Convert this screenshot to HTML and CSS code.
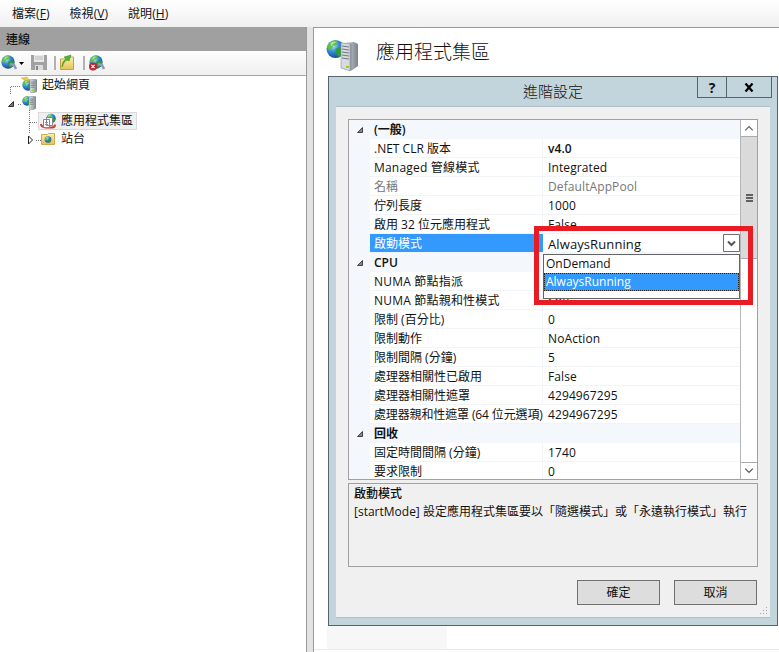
FILE: index.html
```html
<!DOCTYPE html>
<html lang="zh-Hant">
<head>
<meta charset="utf-8">
<title>應用程式集區</title>
<link rel="stylesheet" href="styles.css">
</head>
<body>
<svg width="0" height="0" class="defs">
  <defs>
    <radialGradient id="sea" cx=".35" cy=".3" r=".8"><stop offset="0" stop-color="#c4ecff"/><stop offset=".4" stop-color="#3b92d6"/><stop offset="1" stop-color="#0b3b8c"/></radialGradient>
    <linearGradient id="metal" x1="0" x2="1"><stop offset="0" stop-color="#e8ebee"/><stop offset=".5" stop-color="#b4bac0"/><stop offset="1" stop-color="#7b838b"/></linearGradient>
    <linearGradient id="manila" x1="0" y1="0" x2="0" y2="1"><stop offset="0" stop-color="#fbeeb0"/><stop offset="1" stop-color="#e6c257"/></linearGradient>
    <symbol id="globe" viewBox="0 0 16 16">
      <circle cx="8" cy="8" r="7.6" fill="url(#sea)"/>
      <path d="M2 4 Q5 0 9 1 L10 3 L8 5 L6 5 L5 8 L3 9 L1 7Z" fill="#5fc045"/>
      <path d="M8 8 L12 6 L15 8 Q15 12 11 15 L9 13Z" fill="#2e9b3d"/>
      <path d="M4 3 Q6 1 9 2 Q6 3 4 6Z" fill="#d6f7b6" opacity=".7"/>
    </symbol>
    <symbol id="tower" viewBox="0 0 8 16">
      <path d="M0 1 L5 0 L8 1 V14 L4 16 L0 15Z" fill="url(#metal)" stroke="#777f87" stroke-width=".6"/>
      <path d="M1 3.5H5M1 5.5H5M1 7.5H5M1 9.5H5" stroke="#68717a" stroke-width=".8"/>
      <path d="M2 13H5" stroke="#9acb35" stroke-width="1.5"/>
    </symbol>
  </defs>
</svg>
<div class="app">
  <nav class="menu"><span>檔案(<u>F</u>)</span><span>檢視(<u>V</u>)</span><span>說明(<u>H</u>)</span></nav>
  <div class="work">
    <aside class="side">
      <h2>連線</h2>
      <div class="tools">
        <svg width="110" height="24" viewBox="0 0 110 24">
          <use href="#globe" x="1" y="4" width="14" height="14"/>
          <path d="M10 13l4 1 2 4" fill="none" stroke="#8d9db0" stroke-width="2.6"/>
          <path d="M19 11h5l-2.500 3z" fill="#000"/>
          <path d="M31 4h16v15H31z" fill="#a2a2a2"/><path d="M34 4h10v7H34z" fill="#e9e9e9"/><path d="M35 6h8M35 8h8" stroke="#bbb"/><path d="M35 14h8v5h-8z" fill="#dcdcdc"/><path d="M36 15h2v4h-2z" fill="#888"/>
          <path d="M55 5v14M84 5v14" stroke="#9a9a9a" stroke-width="1.500"/>
          <path d="M60.500 8h6l1-2h6v12.500h-13z" fill="url(#manila)" stroke="#cfa03a"/>
          <path d="M62 16q0-6 4-8l-2-2 7-2-2 6-2-1q-3 1-5 7z" fill="#4eb52d" stroke="#2c8a1c" stroke-width=".5"/>
          <use href="#globe" x="89" y="4" width="14" height="14"/>
          <path d="M98 13l4 1 2 4" fill="none" stroke="#8d9db0" stroke-width="2.600"/>
          <circle cx="93" cy="15.500" r="4" fill="#c5222b"/><path d="M91.400 13.900l3.200 3.200m0-3.200l-3.200 3.200" stroke="#fff" stroke-width="1.200"/>
        </svg>
      </div>
      <ul class="tree">
        <li class="t1"><svg width="38" height="18" viewBox="0 0 38 18"><path d="M10.500 18V10.500H21" fill="none" stroke="#777" stroke-dasharray="1 1"/><use href="#globe" x="22" y="3" width="12" height="12"/><path d="M21 2l6-1 3 4-6-1z" fill="#efc84a" stroke="#c99a22" stroke-width=".4"/><use href="#tower" x="30" y="3" width="7" height="14"/></svg><span>起始網頁</span></li>
        <li class="t2"><svg width="38" height="18" viewBox="0 0 38 18"><path d="M8.500 12.500h5V7.500z" fill="#777" stroke="#333"/><path d="M18 10.500h4M29.500 16v2" stroke="#777" stroke-dasharray="1 1"/><use href="#globe" x="22" y="2" width="10" height="10"/><use href="#tower" x="29" y="2" width="7" height="14"/></svg></li>
        <li class="t3"><svg width="38" height="18" viewBox="0 0 38 18"><path d="M29.500 0V18M30 10.500h8" stroke="#777" stroke-dasharray="1 1"/></svg><span class="picked"><svg width="20" height="17" viewBox="0 0 20 17"><use href="#globe" x="7" y="0" width="10" height="11"/><path d="M2 11q0 3 5 3.500h6q3 0 3-3" fill="none" stroke="#c93a35" stroke-width="2"/><path d="M7.500 4.500h6v8h-6zM4.500 6.500h6v8h-6z" fill="#fff" stroke="#7f8790"/><path d="M6 9.500h3M6 11.500h3" stroke="#8b95a0"/></svg>應用程式集區</span></li>
        <li class="t4"><svg width="57" height="18" viewBox="0 0 57 18"><path d="M29.500 0v4M36 10.500h5" stroke="#777" stroke-dasharray="1 1"/><path d="M28.500 6v8l4-4z" fill="#fff" stroke="#222"/><path d="M41.500 4.500h6l1-1h6v11h-13z" fill="url(#manila)" stroke="#cfa84c"/><use href="#globe" x="44" y="6" width="8" height="7"/></svg><span>站台</span></li>
      </ul>
    </aside>
    <div class="gutter"></div>
    <main class="main">
      <header class="heading">
        <svg width="34" height="34" viewBox="0 0 34 34"><use href="#globe" x="0" y="0" width="19" height="20"/><path d="M15 4L28 3 32 5V27L25 32 15 29Z" fill="url(#metal)"/><path d="M15 4L24 5V32L15 29Z" fill="#d7dbdf" stroke="#868e95" stroke-width=".6"/><path d="M16 7l7 1M16 10l7 1M16 13l7 1M16 16l7 1M16 19l7 1" stroke="#6f7780"/><path d="M25 5V31" stroke="#838b93"/><path d="M20 28h3" stroke="#9c3" stroke-width="2"/></svg>
        <h1>應用程式集區</h1>
      </header>
      <div class="footer-band"><i></i></div>
    </main>
  </div>
</div>

<section class="dialog">
  <div class="title"><span>進階設定</span>
    <div class="winbtns"><b>?</b><b><svg width="10" height="9" viewBox="0 0 10 9"><path d="M1.500.5l7 8M8.500.5l-7 8" stroke="#000" stroke-width="2.300"/></svg></b></div>
  </div>
  <div class="body">
    <div class="grid">
      <div class="rows">
        <div class="cat"><svg width="21" height="18"><path d="M8.500 12.500h5V7.500z" fill="#888" stroke="#444"/></svg><b>(一般)</b></div>
        <div class="row"><span>.NET CLR 版本</span><em class="strong">v4.0</em></div>
        <div class="row"><span class="wide">Managed 管線模式</span><em>Integrated</em></div>
        <div class="row off"><span>名稱</span><em>DefaultAppPool</em></div>
        <div class="row"><span>佇列長度</span><em>1000</em></div>
        <div class="row"><span>啟用 32 位元應用程式</span><em>False</em></div>
        <div class="row sel"><span>啟動模式</span><em><q>AlwaysRunning</q><svg class="combo" width="17" height="18" viewBox="0 0 17 18"><path d="M.5.500h16v17H.5z" fill="#fff" stroke="#707070"/><path d="M5 7.500l3.500 3.500L12 7.500" fill="none" stroke="#555" stroke-width="2"/></svg></em></div>
        <div class="cat"><svg width="21" height="18"><path d="M8.500 12.500h5V7.500z" fill="#888" stroke="#444"/></svg><b>CPU</b></div>
        <div class="row"><span class="wide">NUMA 節點指派</span><em></em></div>
        <div class="row"><span class="wide">NUMA 節點親和性模式</span><em>Soft</em></div>
        <div class="row"><span>限制 (百分比)</span><em>0</em></div>
        <div class="row"><span>限制動作</span><em>NoAction</em></div>
        <div class="row"><span>限制間隔 (分鐘)</span><em>5</em></div>
        <div class="row"><span>處理器相關性已啟用</span><em>False</em></div>
        <div class="row"><span>處理器相關性遮罩</span><em>4294967295</em></div>
        <div class="row"><span class="tight">處理器親和性遮罩 (64 位元選項)</span><em>4294967295</em></div>
        <div class="cat"><svg width="21" height="18"><path d="M8.500 12.500h5V7.500z" fill="#888" stroke="#444"/></svg><b>回收</b></div>
        <div class="row"><span>固定時間間隔 (分鐘)</span><em>1740</em></div>
        <div class="row"><span>要求限制</span><em>0</em></div>
      </div>
      <div class="scroll">
        <svg class="arrow" width="16" height="17" viewBox="0 0 16 17"><path d="M4 11l4-4 4 4" fill="none" stroke="#666" stroke-width="1.400"/></svg>
        <div class="thumb"><i></i><i></i><i></i></div>
        <svg class="arrow down" width="16" height="17" viewBox="0 0 16 17"><path d="M4 6l4 4 4-4" fill="none" stroke="#555" stroke-width="1.400"/></svg>
      </div>
    </div>
    <div class="desc"><b>啟動模式</b><p>[startMode] 設定應用程式集區要以「隨選模式」或「永遠執行模式」執行</p></div>
    <div class="actions"><button>確定</button><button>取消</button></div>
    <svg class="grip" width="8" height="8" viewBox="0 0 8 8"><path d="M6 0h1v1H6zM3 3h1v1H3zM6 3h1v1H6zM0 6h1v1H0zM3 6h1v1H3zM6 6h1v1H6z" fill="#a5a5a5"/></svg>
  </div>
</section>
<div class="list"><div>OnDemand</div><div class="on">AlwaysRunning</div></div>
<div class="mark"></div>
</body>
</html>
```
FILE: styles.css
```css
* { box-sizing: border-box; }
body {
  margin: 0; width: 779px; height: 652px; overflow: hidden; background: #fff; color: #111;
  font: 12px/19px "Open Sans", "Noto Sans CJK TC", sans-serif;
}
.defs { position: absolute; }
.app { display: flex; flex-direction: column; height: 652px; }
.menu { height: 27px; padding: 4px 12px; display: flex; gap: 20px; background: linear-gradient(#fff, #f0f0f0); white-space: nowrap; letter-spacing: .05px; }
.work { flex: 1; display: flex; min-height: 0; }
.side { width: 307px; border-right: 1px solid #999; }
.side h2 { margin: 0; height: 24px; padding: 3px 6px; background: #a0a0a0; font-size: 12px; line-height: 19px; font-weight: 500; }
.tools { height: 25px; background: linear-gradient(#fdfdfd, #f0f0f0); border-bottom: 1px solid #a5a5a5; }
.tools svg { display: block; }
.tree { margin: 0; padding: 0; list-style: none; }
.tree li { height: 18px; display: flex; line-height: 18px; white-space: nowrap; }
.tree .t1, .tree .t4 { gap: 4px; }
.picked { display: flex; gap: 2px; width: 99px; height: 18px; background: #f0f0f0; border: 1px solid #d9d9d9; line-height: 16px; }
.gutter { width: 6px; background: #e3e3e3; }
.main { flex: 1; border-left: 1px solid #999; border-top: 1px solid #999; display: flex; flex-direction: column; justify-content: space-between; }
.heading { display: flex; gap: 16px; padding: 11px 0 0 12px; }
.heading h1 { margin: 0; font-size: 19px; line-height: 26px; font-weight: 300; }
.footer-band { height: 26px; padding: 0 0 2px 13px; background: linear-gradient(#fff 23px, #e9e9e9 23px, #e9e9e9 24px, #fff 24px); }
.footer-band i { display: block; width: 120px; height: 23px; background: #f7f7f7; }

.dialog { position: absolute; left: 328px; top: 76px; width: 450px; height: 550px; background: #c3d5dc; border: 1px solid #58646b; padding: 0 7px 7px; }
.title { display: flex; height: 30px; padding-left: 187px; justify-content: space-between; border-bottom: 1px solid #b0bfc5; }
.title > span { font-size: 15px; line-height: 28px; white-space: nowrap; font-weight: 300; }
.winbtns { display: flex; height: 21px; margin-right: -2px; border: 1px solid #58646b; border-top: 0; }
.winbtns b { display: flex; align-items: center; justify-content: center; width: 28px; font: 700 14px/19px "Open Sans", sans-serif; }
.winbtns b + b { width: 45px; border-left: 1px solid #58646b; }
.body { position: relative; height: 511px; padding: 12px 12px 0; background: #f0f0f0; border-bottom: 1px solid #b0bfc5; }
.grid { height: 361px; width: 410px; border: 1px solid #a0a0a0; display: flex; background: #fff; overflow: hidden; }
.rows { width: 391px; height: 359px; overflow: hidden; background: #f4f7fc; }
.cat { height: 19px; display: flex; gap: 4px; line-height: 20px; }
.cat b { font-weight: 600; }
.row { display: grid; grid-template-columns: 173px 1fr; grid-template-rows: 18px; height: 19px; margin-left: 21px; background: #fff; border-bottom: 1px solid #f1f4f9; line-height: 20px; }
.row span { padding-left: 4px; white-space: nowrap; overflow: hidden; border-right: 1px solid #f1f4f9; }
.row .wide { letter-spacing: .2px; }
.row .tight { letter-spacing: -.13px; border-right: 0; }
.row em { font-style: normal; padding-left: 5px; letter-spacing: .1px; display: flex; justify-content: space-between; }
.row .strong { font-weight: 600; }
.off { color: #777; }
.sel span { background: #3399ff; color: #fff; border: 0; }
.sel q { quotes: none; font-size: 13px; }
.combo { display: block; }
.scroll { width: 17px; border-left: 1px solid #b5b5b5; display: flex; flex-direction: column; }
.arrow { display: block; flex: none; border-bottom: 1px solid #aaa; }
.arrow.down { margin-top: auto; border: 0; border-top: 1px solid #aaa; }
.thumb { height: 122px; background: #dadada; border-bottom: 1px solid #aaa; display: flex; flex-direction: column; align-items: center; justify-content: center; gap: 1px; }
.thumb i { width: 7px; height: 2px; background: #606060; }
.desc { margin-top: 3px; width: 410px; height: 84px; border: 1px solid #a0a0a0; padding: 1px 5px; line-height: 18px; white-space: nowrap; }
.desc b { font-weight: 500; display: block; }
.desc p { margin: 0; }
.actions { display: flex; gap: 14px; justify-content: flex-end; padding: 13px 1px 0 0; }
button { width: 83px; height: 25px; padding: 0; border: 1px solid #707070; background: #ddd; color: #111; font: 12px/20px "Open Sans", "Noto Sans CJK TC", sans-serif; }
.grip { position: absolute; right: 2px; bottom: 2px; }
.list { position: absolute; left: 543px; top: 254px; width: 197px; height: 45px; background: #fff; border: 1px solid #646464; line-height: 18px; }
.list div { height: 18px; padding-left: 2px; }
.list .on { background: #3399ff; color: #fff; outline: 1px dotted #222; outline-offset: -1px; }
.mark { position: absolute; left: 534px; top: 226px; width: 219px; height: 79px; border: 5px solid #e81c24; }
```
